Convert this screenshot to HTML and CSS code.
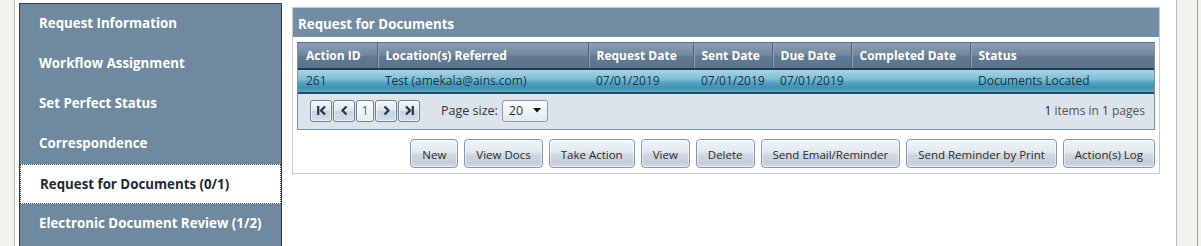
FILE: index.html
```html
<!DOCTYPE html>
<html lang="en">
<head>
  <meta charset="UTF-8" />
  <title>Request for Documents</title>
  <link rel="stylesheet" href="styles.css">
</head>
<body>
  <div class="page">
    <div class="frame">
      <nav class="sidebar">
        <a href="#" class="nav-item">Request Information</a>
        <a href="#" class="nav-item">Workflow Assignment</a>
        <a href="#" class="nav-item">Set Perfect Status</a>
        <a href="#" class="nav-item">Correspondence</a>
        <a href="#" class="nav-item active">Request for Documents (0/1)</a>
        <a href="#" class="nav-item">Electronic Document Review (1/2)</a>
      </nav>

      <section class="panel">
        <h2 class="panel-title">Request for Documents</h2>
        <div class="panel-body">
          <div class="grid">
            <table>
              <colgroup>
                <col style="width: 79px">
                <col style="width: 211px">
                <col style="width: 105px">
                <col style="width: 79px">
                <col style="width: 79px">
                <col style="width: 119px">
                <col>
              </colgroup>
              <thead>
                <tr>
                  <th>Action ID</th>
                  <th>Location(s) Referred</th>
                  <th>Request Date</th>
                  <th>Sent Date</th>
                  <th>Due Date</th>
                  <th>Completed Date</th>
                  <th>Status</th>
                </tr>
              </thead>
              <tbody>
                <tr class="selected">
                  <td>261</td>
                  <td>Test (amekala@ains.com)</td>
                  <td>07/01/2019</td>
                  <td>07/01/2019</td>
                  <td>07/01/2019</td>
                  <td></td>
                  <td>Documents Located</td>
                </tr>
              </tbody>
            </table>

            <div class="pager">
              <div class="pager-nav">
                <button class="pg-btn" title="First">
                  <svg width="11" height="11" viewBox="0 0 11 11"><path d="M2.2 1v9" stroke="#25364a" stroke-width="2.2"/><path d="M9 1.5L5 5.5L9 9.5" fill="none" stroke="#25364a" stroke-width="2.2"/></svg>
                </button>
                <button class="pg-btn" title="Previous">
                  <svg width="11" height="11" viewBox="0 0 11 11"><path d="M7.5 1.5L3.5 5.5L7.5 9.5" fill="none" stroke="#25364a" stroke-width="2.2"/></svg>
                </button>
                <button class="pg-btn pg-num">1</button>
                <button class="pg-btn" title="Next">
                  <svg width="11" height="11" viewBox="0 0 11 11"><path d="M3.5 1.5L7.5 5.5L3.5 9.5" fill="none" stroke="#25364a" stroke-width="2.2"/></svg>
                </button>
                <button class="pg-btn" title="Last">
                  <svg width="11" height="11" viewBox="0 0 11 11"><path d="M2 1.5L6 5.5L2 9.5" fill="none" stroke="#25364a" stroke-width="2.2"/><path d="M8.8 1v9" stroke="#25364a" stroke-width="2.2"/></svg>
                </button>
              </div>
              <label class="page-size">Page size:</label>
              <div class="select">
                <span>20</span>
                <svg width="8" height="5" viewBox="0 0 8 5"><path d="M0 0h8L4 4.5z" fill="#111"/></svg>
              </div>
              <div class="pager-info"><b>1</b> items in <b class="red">1</b> pages</div>
            </div>
          </div>

          <div class="actions">
            <button class="btn">New</button>
            <button class="btn">View Docs</button>
            <button class="btn">Take Action</button>
            <button class="btn">View</button>
            <button class="btn">Delete</button>
            <button class="btn">Send Email/Reminder</button>
            <button class="btn">Send Reminder by Print</button>
            <button class="btn">Action(s) Log</button>
          </div>
        </div>
      </section>
    </div>
    <div class="rail"></div>
  </div>
</body>
</html>
```

FILE: styles.css
```css
* {
  margin: 0;
  padding: 0;
  box-sizing: border-box;
}

body {
  font-family: 'Open Sans', 'Noto Sans', sans-serif;
  background: #fff;
  height: 246px;
  overflow: hidden;
}

.page {
  display: flex;
  height: 246px;
  padding-left: 14px;
  background: #f3f2ee;
}

.frame {
  width: 1163px;
  height: 100%;
  background: #fff;
  border-left: 1px solid #b9b9b9;
  border-right: 1px solid #b9b9b9;
  padding: 3px 0 0 4px;
  display: flex;
  align-items: flex-start;
  gap: 10px;
  overflow: hidden;
}

.rail {
  width: 21px;
  height: 100%;
  border-right: 1px solid #9d9d9d;
}

/* left menu */
.sidebar {
  width: 263px;
  height: 243px;
  flex-shrink: 0;
  background: #6f8aa0;
  border: 1px solid #2f3b47;
  border-bottom: none;
  display: flex;
  flex-direction: column;
}

.nav-item {
  display: flex;
  align-items: center;
  height: 40px;
  flex-shrink: 0;
  padding: 0 0 3px 19px;
  color: #fff;
  font-size: 13.3px;
  font-weight: 700;
  text-decoration: none;
}

.nav-item.active {
  background: #fff;
  color: #1e2a36;
  border: 1px dotted #3b4856;
  padding: 0 0 0 19px;
}

/* main panel */
.panel {
  width: 868px;
  margin-top: 4px;
  border: 1px solid #cacaca;
}

.panel-title {
  display: flex;
  align-items: center;
  height: 29px;
  background: #718ca3;
  color: #fff;
  font-size: 13.3px;
  font-weight: 700;
  padding: 2px 0 0 5px;
}

.panel-body {
  padding: 5px 4px 5px 4px;
}

.grid {
  border: 1px solid #7c8fa4;
  border-top-color: #5d7189;
}

table {
  width: 100%;
  border-collapse: collapse;
  table-layout: fixed;
  font-size: 12px;
}

th {
  height: 26px;
  text-align: left;
  color: #fff;
  font-weight: 700;
  padding: 0 0 1px 8px;
  background: linear-gradient(#8a9eb4 0%, #73899f 45%, #607890 55%, #5b738b 100%);
  border-left: 1px solid #4f6379;
  border-bottom: 2px solid #263a4c;
  box-shadow: inset 1px 0 0 #8fa3b8;
  white-space: nowrap;
}

th:first-child {
  border-left: none;
  box-shadow: none;
}

td {
  height: 24px;
  padding: 0 0 2px 8px;
  color: #1c3244;
  white-space: nowrap;
}

tr.selected td {
  background: linear-gradient(#a7d4e5 0%, #80c0d8 40%, #4d9fbf 62%, #3f92b3 80%, #5aa7c5 100%);
  border-bottom: 2px solid #1f4c5f;
}

.pager {
  display: flex;
  align-items: center;
  height: 35px;
  padding: 0 9px 2px 12px;
  background: #dde3ea;
  font-size: 12px;
  color: #333;
}

.pager-nav {
  display: flex;
  gap: 1px;
}

.pg-btn {
  width: 22px;
  height: 22px;
  display: flex;
  align-items: center;
  justify-content: center;
  border: 1px solid #6d8096;
  border-radius: 3px;
  background: linear-gradient(#f4f7fa 0%, #dde5ed 48%, #c9d4df 52%, #d6dee6 100%);
  box-shadow: inset 0 0 0 1px rgba(255, 255, 255, 0.6);
}

.pg-num {
  width: 18px;
  color: #3c6b9a;
  font-family: 'Open Sans', sans-serif;
  font-size: 12.5px;
  background: linear-gradient(#f9fbfc, #e6ecf1);
}

.page-size {
  margin-left: 21px;
  font-size: 12.5px;
}

.select {
  display: flex;
  align-items: center;
  justify-content: space-between;
  width: 46px;
  height: 22px;
  margin-left: 4px;
  padding: 0 6px 0 6px;
  border: 1px solid #8a9bb0;
  border-radius: 3px;
  background: linear-gradient(#fbfcfd, #e4e9ee);
  font-size: 12.5px;
}

.pager-info {
  margin-left: auto;
  color: #555;
}

.pager-info b {
  font-weight: 400;
  color: #222;
}

.pager-info b.red {
  color: #6b1f1f;
}

/* action buttons */
.actions {
  display: flex;
  justify-content: flex-end;
  gap: 6px;
  margin-top: 9px;
}

.btn {
  height: 29px;
  padding: 2px 11px 0;
  font-family: 'Open Sans', sans-serif;
  font-size: 11.5px;
  color: #2b2b2b;
  border: 1px solid #8597ab;
  border-radius: 4px;
  background: linear-gradient(#f3f6f9 0%, #e2e8ee 45%, #cfd8e1 55%, #c4ced9 85%, #d6dde5 100%);
  box-shadow: inset 0 0 0 1px rgba(255, 255, 255, 0.5);
}
```
